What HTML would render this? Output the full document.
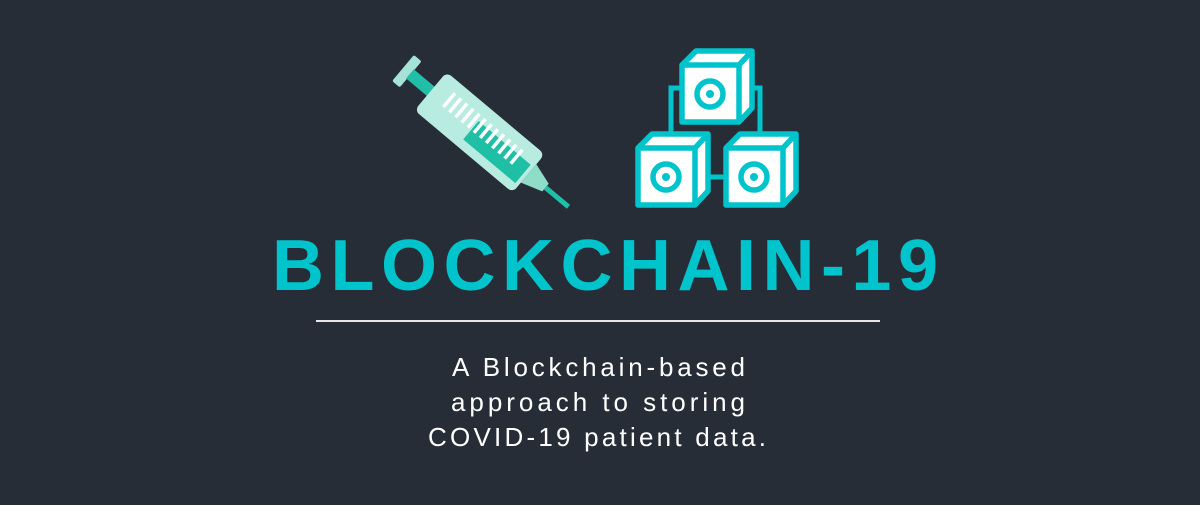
<!DOCTYPE html>
<html><head><style>
html,body{margin:0;padding:0;background:#272d37;}
body{width:1200px;height:500px;overflow:hidden;}
</style></head><body>
<svg width="1200" height="500" viewBox="0 0 1200 500" xmlns="http://www.w3.org/2000/svg">
<rect width="1200" height="500" fill="#272d37"/>
<!-- syringe -->
<g transform="translate(403,68) rotate(40)">
  <rect x="0" y="-17" width="10" height="34" rx="2" fill="#a6e3d6"/>
  <rect x="9" y="-6" width="32" height="12" fill="#22bfa8"/>
  <rect x="36" y="-25" width="128" height="50" rx="6" fill="#b9ece0"/>
  <rect x="92" y="-8" width="68" height="24" fill="#1fbfa6"/>
  <g stroke="#ffffff" stroke-width="3.5">
    <line x1="56" y1="-14" x2="56" y2="4"/><line x1="64" y1="-14" x2="64" y2="4"/>
    <line x1="72" y1="-14" x2="72" y2="4"/><line x1="80" y1="-14" x2="80" y2="4"/>
    <line x1="88" y1="-14" x2="88" y2="4"/><line x1="96" y1="-14" x2="96" y2="4"/>
    <line x1="104" y1="-14" x2="104" y2="4"/><line x1="112" y1="-14" x2="112" y2="4"/>
    <line x1="120" y1="-14" x2="120" y2="4"/><line x1="128" y1="-14" x2="128" y2="4"/>
    <line x1="136" y1="-14" x2="136" y2="4"/><line x1="144" y1="-14" x2="144" y2="4"/>
  </g>
  <polygon points="164,-12 186,-5 186,5 164,12" fill="#8fdcc9"/>
  <rect x="186" y="-2.5" width="30" height="5" fill="#20bfa7"/>
</g>
<!-- cubes -->
<defs>
<g id="cube">
  <polygon points="0,14 14,0 70,0 70,57 57,71 0,71" fill="#fff" stroke="#00c4cc" stroke-width="5.5" stroke-linejoin="round"/>
  <polyline points="0,14 57,14 70,0" fill="none" stroke="#00c4cc" stroke-width="5.5" stroke-linejoin="round"/>
  <line x1="57" y1="14" x2="57" y2="71" stroke="#00c4cc" stroke-width="5.5"/>
  <circle cx="28" cy="43" r="13" fill="none" stroke="#00c4cc" stroke-width="5.5"/>
  <circle cx="28" cy="43" r="4" fill="#00c4cc"/>
</g>
</defs>
<g stroke="#00c4cc" stroke-width="5" fill="none">
  <polyline points="682,88 671,88 671,148"/>
  <polyline points="752,88 760,88 760,148"/>
  <line x1="705" y1="177" x2="727" y2="177"/>
</g>
<use href="#cube" x="682" y="51"/>
<use href="#cube" x="638" y="134"/>
<use href="#cube" x="726" y="134"/>
<!-- title -->
<text x="272" y="290" textLength="666" lengthAdjust="spacing" font-family="Liberation Sans, sans-serif" font-weight="bold" font-size="72" fill="#00c4cc">BLOCKCHAIN-19</text>
<rect x="316" y="320" width="564" height="2" fill="#e6e6e6"/>
<g font-family="Liberation Sans, sans-serif" font-size="26" fill="#ffffff">
  <text x="452" y="376" textLength="293" lengthAdjust="spacing">A Blockchain-based</text>
  <text x="451" y="411" textLength="294" lengthAdjust="spacing">approach to storing</text>
  <text x="428" y="446" textLength="338" lengthAdjust="spacing">COVID-19 patient data.</text>
</g>
</svg>
</body></html>
